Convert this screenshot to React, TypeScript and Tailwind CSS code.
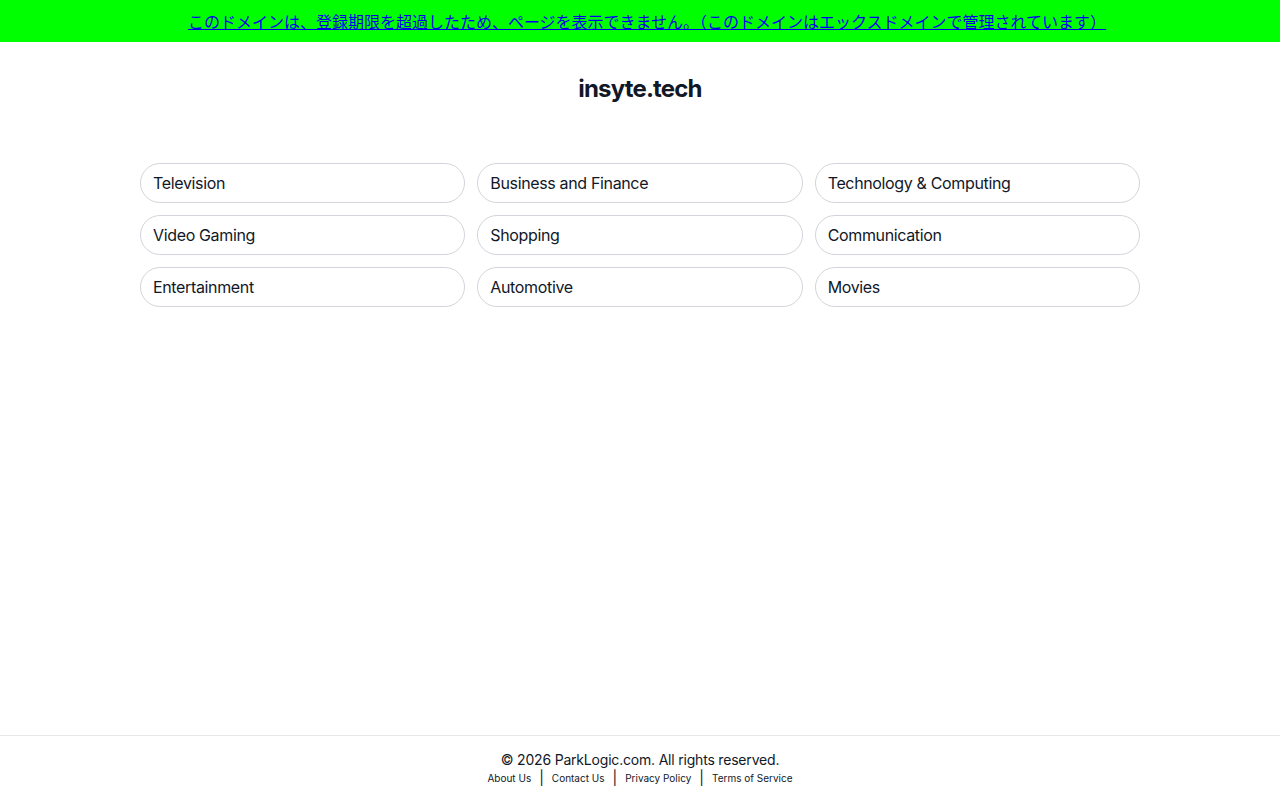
const categories = [
  'Television',
  'Business and Finance',
  'Technology & Computing',
  'Video Gaming',
  'Shopping',
  'Communication',
  'Entertainment',
  'Automotive',
  'Movies',
]

const links = ['About Us', 'Contact Us', 'Privacy Policy', 'Terms of Service']

export default function App() {
  return (
    <div className="flex flex-col min-h-screen bg-white font-['Inter',sans-serif]">
      <div className="h-[42px] bg-[#00ff00] flex items-center justify-center">
        <a
          href="#"
          className="ml-[14px] text-[16px] leading-[20px] text-[#0000ee] underline font-['Noto_Sans_CJK_JP',sans-serif]"
        >
          このドメインは、登録期限を超過したため、ページを表示できません。（このドメインはエックスドメインで管理されています）
        </a>
      </div>

      <main className="flex-1 flex flex-col items-center">
        <h1 className="mt-[31px] text-2xl leading-8 font-bold text-[#111827] tracking-[-0.035em]">
          insyte.tech
        </h1>
        <div className="mt-[58px] w-[1000px] grid grid-cols-3 gap-3">
          {categories.map((c) => (
            <a
              key={c}
              href="#"
              className="h-10 flex items-center px-3 border border-[#d1d5db] rounded-full text-base text-[#111827] tracking-[-0.022em]"
            >
              {c}
            </a>
          ))}
        </div>
      </main>

      <footer className="border-t border-[#e5e7eb] pt-[14px] pb-[14px] flex flex-col items-center text-[#111827]">
        <p className="text-sm leading-5 tracking-[-0.014em]">© 2026 ParkLogic.com. All rights reserved.</p>
        <div className="flex items-center text-[10px] leading-[16px]">
          {links.map((l, i) => (
            <span key={l} className="flex items-center">
              {i > 0 && <span className="mx-2 text-sm leading-4">|</span>}
              <a href="#">{l}</a>
            </span>
          ))}
        </div>
      </footer>
    </div>
  )
}
